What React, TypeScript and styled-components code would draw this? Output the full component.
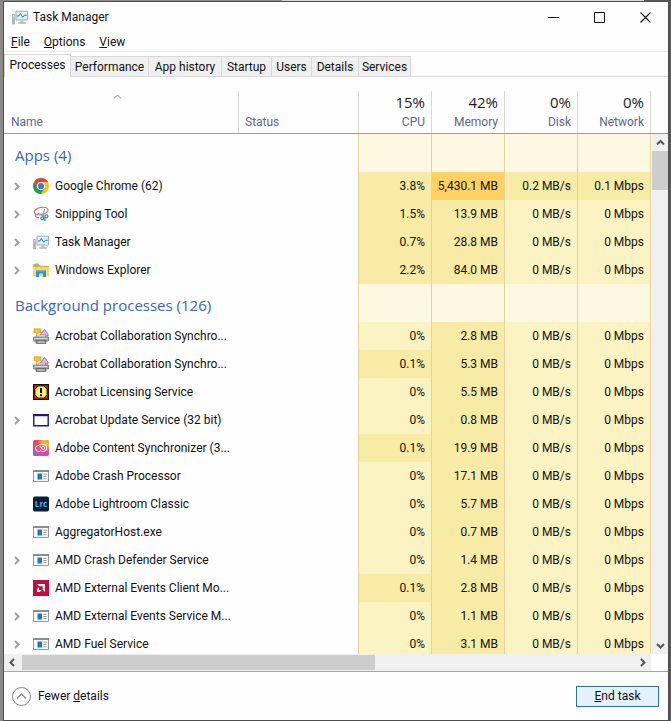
import React, { useState } from "react";
import styled, { createGlobalStyle } from "styled-components";

const displayFont = `"Open Sans", "Noto Sans", sans-serif`;

const GlobalStyle = createGlobalStyle`
  * { box-sizing: border-box; }
  body {
    margin: 0;
    background: linear-gradient(90deg, #8b8a88 0 42%, #d4d4d4 42% 96%, #595959 96%);
    font-family: Roboto, "Open Sans", sans-serif;
    font-size: 12px;
    line-height: 16px;
    color: #111;
  }
  button { font: inherit; color: inherit; border: 0; padding: 0; background: none; }
`;

const Desktop = styled.div`
  display: flex;
  height: 100vh;
  padding: 1px 2px 0 3px;
`;

const Window = styled.main`
  flex: 1;
  min-width: 0;
  display: flex;
  flex-direction: column;
  background: #fefefe;
  border: 1px solid #4d4d4d;
`;

const TitleBar = styled.header`
  display: flex;
  align-items: center;
  height: 30px;
  padding-left: 8px;
  flex: none;
`;

const Title = styled.h1`
  flex: 1;
  margin: 0 0 0 5px;
  font-size: 12px;
  font-weight: 400;
`;

const CaptionButton = styled.button`
  width: 46px;
  height: 28px;
  display: grid;
  place-items: center;
`;

const MenuBar = styled.nav`
  display: flex;
  gap: 14px;
  height: 20px;
  padding-left: 7px;
  border-bottom: 1px solid #ececec;
  flex: none;
`;

const MenuItem = styled.button`
  height: 19px;
`;

const TabStrip = styled.div`
  display: flex;
  align-items: flex-end;
  height: 25px;
  border-bottom: 1px solid #d9d9d9;
  flex: none;
`;

const Tab = styled.button<{ $active?: boolean; $width: number }>`
  width: ${(p) => p.$width}px;
  height: ${(p) => (p.$active ? 23 : 20)}px;
  padding-bottom: ${(p) => (p.$active ? 3 : 0)}px;
  margin-bottom: ${(p) => (p.$active ? -1 : 0)}px;
  background: ${(p) => (p.$active ? "#fefefe" : "#f0f0f0")};
  border: 1px solid #d9d9d9;
  border-bottom: 0;
  border-left-width: ${(p) => (p.$active ? 1 : 0)}px;
  white-space: nowrap;
`;

const ProcessArea = styled.section`
  flex: 1;
  min-height: 0;
  display: flex;
`;

const TableViewport = styled.div`
  flex: 1;
  min-width: 0;
  overflow: hidden;
`;

const ProcessTable = styled.table`
  width: 100%;
  table-layout: fixed;
  border-collapse: separate;
  border-spacing: 0;
`;

const NameCol = styled.col``;
const StatusCol = styled.col`width: 120px;`;
const ValueCol = styled.col`width: 73px;`;
const LastCol = styled.col`width: 74px;`;

const HeadCell = styled.th<{ $numeric?: boolean; $first?: boolean }>`
  height: 57px;
  padding: 0 6px 3px 7px;
  vertical-align: bottom;
  text-align: ${(p) => (p.$numeric ? "right" : "left")};
  font-weight: 400;
  color: #5d6785;
  border-bottom: 1px solid #9a9a9a;
  background: ${(p) =>
    p.$first ? "none" : "linear-gradient(#d8d8d8, #d8d8d8) left bottom / 1px 42px no-repeat"};
  &:last-child {
    padding-right: 7px;
    background:
      linear-gradient(#d8d8d8, #d8d8d8) left bottom / 1px 42px no-repeat,
      linear-gradient(#d8d8d8, #d8d8d8) right bottom / 1px 42px no-repeat;
  }
`;

const SortMark = styled.span`
  display: flex;
  justify-content: center;
  height: 22px;
  padding-right: 8px;
`;

const Total = styled.span`
  display: block;
  font-family: ${displayFont};
  font-size: 15px;
  line-height: 20px;
  margin-bottom: 2px;
  color: #1b1b1b;
`;

const Row = styled.tr<{ $group?: boolean }>`
  height: ${(p) => (p.$group ? 38 : 28)}px;
`;

const GroupCell = styled.th`
  padding: 4px 0 0 11px;
  text-align: left;
  font-family: ${displayFont};
  font-size: 15px;
  line-height: 20px;
  font-weight: 400;
  color: #3a66b0;
`;

const NameCell = styled.td`
  padding: 0;
`;

const NameInner = styled.div`
  display: grid;
  grid-template-columns: 29px 22px 1fr;
  align-items: center;
`;

const Expander = styled.button`
  width: 24px;
  height: 16px;
  display: grid;
  place-items: center;
`;

const ProcessName = styled.span`
  white-space: nowrap;
`;

const heat = ["#fef8e2", "#fcf3c2", "#f8eba6", "#ffd062"];

const ValueCell = styled.td<{ $level: number }>`
  padding: 0 6px 0 0;
  text-align: right;
  white-space: nowrap;
  background: ${(p) => heat[p.$level]};
  border-left: 1px solid #e2d3a0;
  &:last-child {
    border-right: 1px solid #e2d3a0;
  }
`;

const VerticalRail = styled.div`
  width: 17px;
  display: flex;
  flex-direction: column;
`;

const RailHead = styled.div`
  height: 57px;
  border-bottom: 1px solid #9a9a9a;
  flex: none;
`;

const VerticalBar = styled.div`
  flex: 1;
  width: 16px;
  margin-left: 1px;
  display: flex;
  flex-direction: column;
  background: #f0f0f0;
`;

const ScrollButton = styled.button<{ $push?: boolean }>`
  width: 17px;
  height: 17px;
  display: grid;
  place-items: center;
  flex: none;
  margin: ${(p) => (p.$push ? "auto 0 0 auto" : "0")};
`;

const VerticalThumb = styled.div`
  height: 39px;
  background: #cdcdcd;
`;

const HorizontalBar = styled.div`
  display: flex;
  align-items: center;
  height: 17px;
  margin-right: 17px;
  background: #f0f0f0;
  flex: none;
`;

const HorizontalThumb = styled.div`
  width: 54.5%;
  height: 15px;
  margin-left: 1px;
  background: #cdcdcd;
`;

const Footer = styled.footer`
  display: flex;
  align-items: center;
  justify-content: space-between;
  height: 49px;
  padding: 0 9px 0 8px;
  border-top: 1px solid #a6a6a6;
  flex: none;
`;

const FewerButton = styled.button`
  display: flex;
  align-items: center;
  gap: 7px;
`;

const EndButton = styled.button`
  width: 83px;
  height: 21px;
  background: #e4f0fb;
  border: 1px solid #2b7294;
`;

type ArrowDir = "up" | "down" | "left" | "right";
const arrows: Record<ArrowDir, string> = {
  up: "M1 6.5 4.5 3 8 6.5",
  down: "M1 3 4.5 6.5 8 3",
  left: "M6 1 2.5 4.5 6 8",
  right: "M3 1 6.5 4.5 3 8",
};

function Arrow({ dir, color = "#555", weight = 2 }: { dir: ArrowDir; color?: string; weight?: number }) {
  return (
    <svg width="9" height="9" viewBox="0 0 9 9" fill="none" stroke={color} strokeWidth={weight} aria-hidden="true">
      <path d={arrows[dir]} />
    </svg>
  );
}

type IconKind =
  | "chrome" | "snip" | "taskmgr" | "folder" | "collab" | "license"
  | "window" | "cloud" | "generic" | "lightroom" | "amd";

const drawings: Record<IconKind, React.ReactNode> = {
  chrome: (
    <>
      <circle cx="8" cy="8" r="8" fill="#fbc116" />
      <path d="M1.07 4A8 8 0 0 1 14.93 4H8A4 4 0 0 0 4.54 10Z" fill="#dc4437" />
      <path d="M1.07 4A8 8 0 0 0 8 16L11.46 10A4 4 0 0 1 4.54 10Z" fill="#259b4f" />
      <circle cx="8" cy="8" r="4.1" fill="#fff" />
      <circle cx="8" cy="8" r="3.1" fill="#4077dc" />
    </>
  ),
  snip: (
    <>
      <ellipse cx="8.2" cy="5" rx="7" ry="3.6" transform="rotate(-12 8.2 5)" fill="#fff" stroke="#d9686b" strokeWidth="1.1" />
      <path d="M3 7.5C1 9.5 3 12 6 11.5" fill="none" stroke="#d9686b" strokeWidth="1.1" />
      <path d="m4.5 7 6.5 3.2M11.5 3 9.8 11" stroke="#8797a1" strokeWidth="1.2" />
      <path d="m6 8.3 6-1.3" stroke="#a8b4bb" strokeWidth="1" />
      <circle cx="9.2" cy="12.3" r="1.4" fill="none" stroke="#3a8cc0" strokeWidth="1.3" />
      <circle cx="13.4" cy="10.4" r="1.5" fill="none" stroke="#3a8cc0" strokeWidth="1.3" />
      <path d="M11.8 11v4" stroke="#3a8cc0" strokeWidth="1.3" />
    </>
  ),
  taskmgr: (
    <>
      <path d="M.5 5.5h2v9.5h-2z" fill="#b9bfbe" stroke="#929b9a" strokeWidth=".6" />
      <path d="M1 7h1.2" stroke="#fff" />
      <path d="M4 2.2h11.5v8.8H4z" fill="#d9f1fb" stroke="#98a5ab" strokeWidth=".9" />
      <path d="M5 7h1.7L8.4 4.5l2.3 3.8 1.8-2h2.2" fill="none" stroke="#277ea8" />
      <path d="M8.5 11.5h3v2h-3z" fill="#b5bcbc" />
      <path d="M6 14h8" stroke="#a0a8a8" strokeWidth="1.2" />
    </>
  ),
  folder: (
    <>
      <path d="M0 2.2h6l1.5 1.5H16V14H0z" fill="#e5ad3f" />
      <path d="M1.5 1.5h4v2h-4z" fill="#9ebc64" />
      <path d="M0 5h16v9.5H0z" fill="#f8d774" />
      <path d="M3 8h10v7h-3v-3.5H6V15H3z" fill="#3c91ca" />
      <path d="M3 8h10v1.5H3z" fill="#69b4de" />
    </>
  ),
  collab: (
    <>
      <path d="m7 7 4.5-5.5L15 6v2H7z" fill="#dcb5e6" stroke="#a45fc0" strokeWidth=".9" />
      <path d="M1 .8h7v4H5.5L3.5 6.5V4.8H1z" fill="#f7c331" stroke="#cf9515" strokeWidth=".6" />
      <path d="M3.5 7h9v3h-9z" fill="#e7e5e4" stroke="#8a8988" strokeWidth=".6" />
      <path d="M.5 9h15v4H.5z" fill="#a3a3a3" stroke="#6b6b6b" strokeWidth=".7" />
      <path d="M1.5 10.5h13" stroke="#d9d9d9" />
      <path d="M3 12.5h10v3H3z" fill="#8c8c8c" stroke="#5f5f5f" strokeWidth=".7" />
      <path d="M4.5 14h7" stroke="#ddd" />
    </>
  ),
  license: (
    <>
      <path d="M.6.6h14.8v14.8H.6z" fill="#c4231e" stroke="#1d0f0c" strokeWidth="1.2" />
      <path d="M5.2 2h5.6L14 5.2v5.6L10.8 14H5.2L2 10.8V5.2z" fill="#fdf07a" stroke="#1d1508" strokeWidth=".9" />
      <path d="M8 4v5M8 10.3v2" stroke="#15130b" strokeWidth="2" />
    </>
  ),
  window: (
    <>
      <path d="M.8 2.8h14.4v11H.8z" fill="#fff" stroke="#1a1792" strokeWidth="1.4" />
      <path d="M1 3.2h14" stroke="#1a1792" strokeWidth="2" />
    </>
  ),
  cloud: (
    <>
      <defs>
        <linearGradient id="cloudBase" x1="0" y1="0" x2="1" y2="1">
          <stop stopColor="#e8463f" /><stop offset=".5" stopColor="#ee5090" /><stop offset="1" stopColor="#c04ad2" />
        </linearGradient>
        <radialGradient id="cloudWarm" cx="1" cy="0" r=".75">
          <stop stopColor="#8fcf45" /><stop offset=".45" stopColor="#f7b92d" /><stop offset="1" stopColor="#ffa62d" stopOpacity="0" />
        </radialGradient>
        <radialGradient id="cloudCool" cx="0" cy="1" r=".65">
          <stop stopColor="#3785f0" /><stop offset="1" stopColor="#9c52e0" stopOpacity="0" />
        </radialGradient>
      </defs>
      <rect width="16" height="16" rx="2" fill="url(#cloudBase)" />
      <rect width="16" height="16" rx="2" fill="url(#cloudWarm)" />
      <rect width="16" height="16" rx="2" fill="url(#cloudCool)" />
      <path
        d="M8.5 9.8C7.5 11 6.500 11.500 5.500 11.500A3 3 0 0 1 5.500 5.500C8 5.500 8 9.500 10.300 9.500A1.500 1.500 0 0 0 10.300 6.500C9.500 6.500 9 7 8.500 7.500M6 4.800C7 4.200 8.500 4 10 4.300A3.600 3.600 0 0 1 10.300 11.500H8.500"
        fill="none" stroke="#fff" strokeOpacity=".9" strokeWidth=".9"
      />
    </>
  ),
  generic: (
    <>
      <path d="M.5 2.500h15v11H.5z" fill="#f8f8f6" stroke="#92979a" />
      <path d="M0 3h16" stroke="#888d90" strokeWidth="2" />
      <path d="M4.500 5.500H9v6H4.500z" fill="#167bc4" />
      <path d="M10.200 6.300h3.500M10.200 8.500h3.500M10.200 10.700h3.500" stroke="#9ba3a7" />
    </>
  ),
  lightroom: (
    <>
      <rect y=".5" width="16" height="15" rx="2" fill="#061e35" />
      <text x="8" y="11" textAnchor="middle" fontFamily="Open Sans, sans-serif" fontWeight="700" fontSize="8" fill="#5aa9e6">Lrc</text>
    </>
  ),
  amd: (
    <>
      <path d="M0 0h16v16H0z" fill="#c60c3e" />
      <path d="M4 4h8v8L9.700 9.700V6.300H6.300z" fill="#fff" />
      <path d="M6 7.200v2.800h2.800L6.800 12H4V9.200z" fill="#fff" />
    </>
  ),
};

function AppIcon({ kind }: { kind: IconKind }) {
  return <svg width="16" height="16" viewBox="0 0 16 16" aria-hidden="true">{drawings[kind]}</svg>;
}

type Process = { name: string; icon: IconKind; values: string[]; expandable?: boolean };

const process = (
  name: string, icon: IconKind, expandable: boolean, cpu: string, memory: string, disk = "0 MB/s", network = "0 Mbps",
): Process => ({ name, icon, expandable, values: [cpu, memory, disk, network] });

const groups = [
  {
    label: "Apps (4)",
    items: [
      process("Google Chrome (62)", "chrome", true, "3.8%", "5,430.1 MB", "0.2 MB/s", "0.1 Mbps"),
      process("Snipping Tool", "snip", true, "1.5%", "13.9 MB"),
      process("Task Manager", "taskmgr", true, "0.7%", "28.8 MB"),
      process("Windows Explorer", "folder", true, "2.2%", "84.0 MB"),
    ],
  },
  {
    label: "Background processes (126)",
    items: [
      process("Acrobat Collaboration Synchro...", "collab", false, "0%", "2.8 MB"),
      process("Acrobat Collaboration Synchro...", "collab", false, "0.1%", "5.3 MB"),
      process("Acrobat Licensing Service", "license", false, "0%", "5.5 MB"),
      process("Acrobat Update Service (32 bit)", "window", true, "0%", "0.8 MB"),
      process("Adobe Content Synchronizer (3...", "cloud", false, "0.1%", "19.9 MB"),
      process("Adobe Crash Processor", "generic", false, "0%", "17.1 MB"),
      process("Adobe Lightroom Classic", "lightroom", false, "0%", "5.7 MB"),
      process("AggregatorHost.exe", "generic", false, "0%", "0.7 MB"),
      process("AMD Crash Defender Service", "generic", true, "0%", "1.4 MB"),
      process("AMD External Events Client Mo...", "amd", false, "0.1%", "2.8 MB"),
      process("AMD External Events Service M...", "generic", true, "0%", "1.1 MB"),
      process("AMD Fuel Service", "generic", true, "0%", "3.1 MB"),
    ],
  },
];

const tabs = [
  { label: "Processes", width: 67 },
  { label: "Performance", width: 78 },
  { label: "App history", width: 73 },
  { label: "Startup", width: 50 },
  { label: "Users", width: 40 },
  { label: "Details", width: 47 },
  { label: "Services", width: 52 },
];

const totals = [["15%", "CPU"], ["42%", "Memory"], ["0%", "Disk"], ["0%", "Network"]];

function levelOf(value: string, column: number) {
  const amount = parseFloat(value.replace(",", ""));
  if (column === 1) return amount > 1000 ? 3 : 2;
  return amount > 0 ? 2 : 1;
}

function ProcessRow({ item }: { item: Process }) {
  return (
    <Row>
      <NameCell colSpan={2}>
        <NameInner>
          {item.expandable ? (
            <Expander aria-label={`Expand ${item.name}`}><Arrow dir="right" color="#a0a0a0" /></Expander>
          ) : <span />}
          <AppIcon kind={item.icon} />
          <ProcessName>{item.name}</ProcessName>
        </NameInner>
      </NameCell>
      {item.values.map((value, i) => <ValueCell key={i} $level={levelOf(value, i)}>{value}</ValueCell>)}
    </Row>
  );
}

export default function App() {
  const [active, setActive] = useState("Processes");
  return (
    <>
      <GlobalStyle />
      <Desktop>
        <Window>
          <TitleBar>
            <AppIcon kind="taskmgr" />
            <Title>Task Manager</Title>
            <CaptionButton aria-label="Minimize">
              <svg width="11" height="11" stroke="#111"><path d="M0 5.500h11" /></svg>
            </CaptionButton>
            <CaptionButton aria-label="Maximize">
              <svg width="11" height="11" stroke="#111" fill="none"><path d="M.5.5h10v10H.5z" /></svg>
            </CaptionButton>
            <CaptionButton aria-label="Close">
              <svg width="11" height="11" stroke="#111" strokeWidth="1.1"><path d="m.5.5 10 10m0-10-10 10" /></svg>
            </CaptionButton>
          </TitleBar>
          <MenuBar>
            <MenuItem><u>F</u>ile</MenuItem>
            <MenuItem><u>O</u>ptions</MenuItem>
            <MenuItem><u>V</u>iew</MenuItem>
          </MenuBar>
          <TabStrip role="tablist">
            {tabs.map((t) => (
              <Tab key={t.label} role="tab" aria-selected={t.label === active} $active={t.label === active}
                $width={t.width} onClick={() => setActive(t.label)}>{t.label}</Tab>
            ))}
          </TabStrip>
          <ProcessArea>
            <TableViewport>
              <ProcessTable>
                <colgroup><NameCol /><StatusCol /><ValueCol /><ValueCol /><ValueCol /><LastCol /></colgroup>
                <thead>
                  <tr>
                    <HeadCell $first aria-sort="ascending">
                      <SortMark><Arrow dir="up" color="#888" weight={1} /></SortMark>
                      Name
                    </HeadCell>
                    <HeadCell>Status</HeadCell>
                    {totals.map(([total, label]) => (
                      <HeadCell key={label} $numeric><Total>{total}</Total>{label}</HeadCell>
                    ))}
                  </tr>
                </thead>
                {groups.map((group) => (
                  <tbody key={group.label}>
                    <Row $group>
                      <GroupCell colSpan={2}>{group.label}</GroupCell>
                      {totals.map(([, label]) => <ValueCell key={label} $level={0} />)}
                    </Row>
                    {group.items.map((item, i) => <ProcessRow key={i} item={item} />)}
                  </tbody>
                ))}
              </ProcessTable>
            </TableViewport>
            <VerticalRail>
              <RailHead />
              <VerticalBar>
                <ScrollButton aria-label="Scroll up"><Arrow dir="up" /></ScrollButton>
                <VerticalThumb />
                <ScrollButton $push aria-label="Scroll down"><Arrow dir="down" /></ScrollButton>
              </VerticalBar>
            </VerticalRail>
          </ProcessArea>
          <HorizontalBar>
            <ScrollButton aria-label="Scroll left"><Arrow dir="left" /></ScrollButton>
            <HorizontalThumb />
            <ScrollButton $push aria-label="Scroll right"><Arrow dir="right" /></ScrollButton>
          </HorizontalBar>
          <Footer>
            <FewerButton>
              <svg width="19" height="19" viewBox="0 0 19 19" fill="none" stroke="#858585" aria-hidden="true">
                <circle cx="9.500" cy="9.500" r="9" /><path d="m5 11.500 4.500-4.500 4.500 4.500" strokeWidth="1.4" />
              </svg>
              <span>Fewer <u>d</u>etails</span>
            </FewerButton>
            <EndButton><span><u>E</u>nd task</span></EndButton>
          </Footer>
        </Window>
      </Desktop>
    </>
  );
}
